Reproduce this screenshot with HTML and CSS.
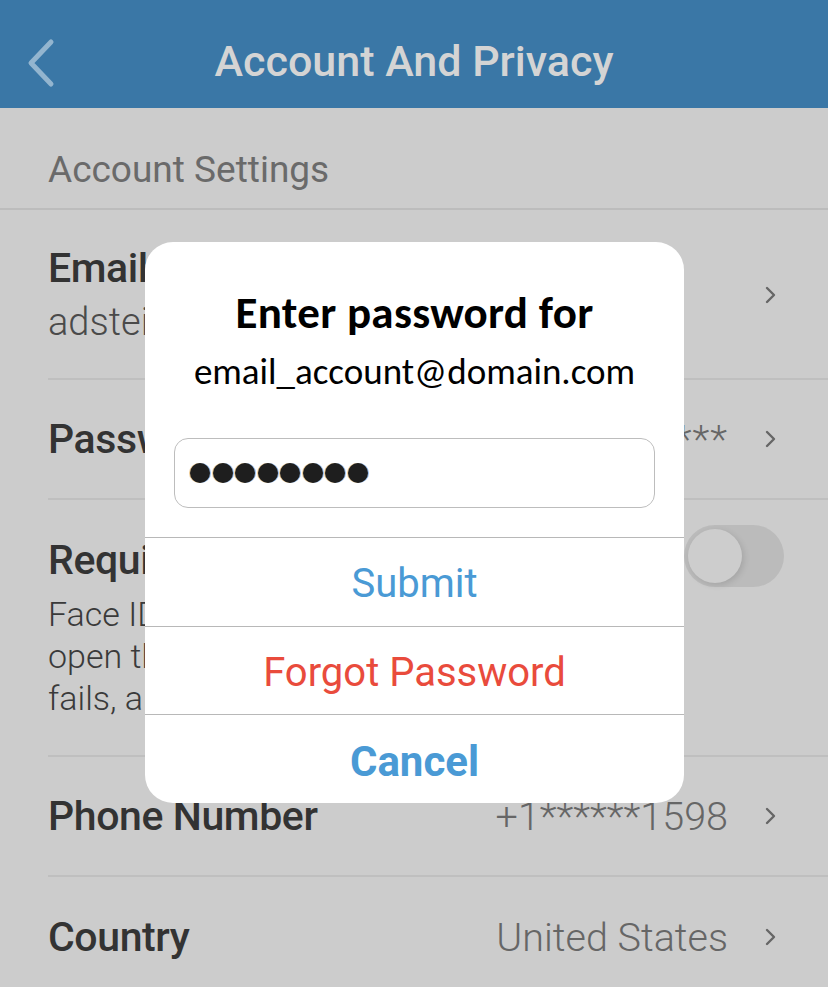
FILE: index.html
```html
<!DOCTYPE html>
<html lang="en">
<head>
<meta charset="utf-8">
<title>Account And Privacy</title>
<link rel="stylesheet" href="styles.css">
</head>
<body>
<div class="screen">
  <header class="navbar">
    <div class="nav-left">
      <svg class="back" width="30" height="50" viewBox="0 0 30 50"><path d="M25 4 L5 25 L25 46" fill="none" stroke="#93b5cf" stroke-width="5" stroke-linecap="round" stroke-linejoin="round"/></svg>
    </div>
    <h1 class="nav-title">Account And Privacy</h1>
    <div class="nav-right"></div>
  </header>

  <div class="section-title">Account Settings</div>

  <div class="list">
    <div class="row row-email">
      <div class="row-text">
        <div class="row-label">Email</div>
        <div class="row-sub">adstein1</div>
      </div>
      <svg class="chev" width="12" height="18" viewBox="0 0 12 18"><path d="M2 2 L9 9 L2 16" fill="none" stroke="#666" stroke-width="2.4" stroke-linecap="round" stroke-linejoin="round"/></svg>
    </div>
    <div class="row row-simple">
      <div class="row-label">Password</div>
      <div class="row-value stars">********</div>
      <svg class="chev" width="12" height="18" viewBox="0 0 12 18"><path d="M2 2 L9 9 L2 16" fill="none" stroke="#666" stroke-width="2.4" stroke-linecap="round" stroke-linejoin="round"/></svg>
    </div>
    <div class="row row-faceid">
      <div class="row-text">
        <div class="row-label">Require ID</div>
        <div class="row-desc">
          <span class="line">Face ID is</span>
          <span class="line">open the app</span>
          <span class="line">fails, a PIN</span>
        </div>
      </div>
      <div class="toggle"><div class="knob"></div></div>
    </div>
    <div class="row row-simple">
      <div class="row-label">Phone Number</div>
      <div class="row-value">+1******1598</div>
      <svg class="chev" width="12" height="18" viewBox="0 0 12 18"><path d="M2 2 L9 9 L2 16" fill="none" stroke="#666" stroke-width="2.4" stroke-linecap="round" stroke-linejoin="round"/></svg>
    </div>
    <div class="row row-simple last">
      <div class="row-label">Country</div>
      <div class="row-value">United States</div>
      <svg class="chev" width="12" height="18" viewBox="0 0 12 18"><path d="M2 2 L9 9 L2 16" fill="none" stroke="#666" stroke-width="2.4" stroke-linecap="round" stroke-linejoin="round"/></svg>
    </div>
  </div>

  <div class="dialog">
    <div class="dialog-body">
      <div class="dialog-title">Enter password for</div>
      <div class="dialog-email">email_account@domain.com</div>
      <div class="pw-field">
        <span class="dot"></span><span class="dot"></span><span class="dot"></span><span class="dot"></span><span class="dot"></span><span class="dot"></span><span class="dot"></span><span class="dot"></span>
      </div>
    </div>
    <div class="dialog-btn submit">Submit</div>
    <div class="dialog-btn forgot">Forgot Password</div>
    <div class="dialog-btn cancel">Cancel</div>
  </div>
</div>
</body>
</html>
```

FILE: styles.css
```css
* { box-sizing: border-box; }
html, body { margin: 0; padding: 0; }
body {
  background: #cccccc;
  font-family: Roboto, "Liberation Sans", sans-serif;
  width: 828px;
  height: 987px;
  overflow: hidden;
}
.screen {
  position: relative;
  width: 828px;
  height: 987px;
  overflow: hidden;
  background: #cccccc;
}
.navbar {
  height: 108px;
  padding-top: 14px;
  background: #3a77a6;
  display: grid;
  grid-template-columns: 1fr auto 1fr;
  align-items: center;
}
.nav-left { padding-left: 26px; display: flex; align-items: center; padding-top: 4px; }
.nav-title {
  margin: 0;
  font-weight: 500;
  font-size: 43px;
  color: #d4d4d4;
  letter-spacing: 0px;
}
.section-title {
  height: 102px;
  padding: 40px 0 0 48px;
  font-size: 37px;
  line-height: 44px;
  color: #6a6a6a;
  border-bottom: 2px solid #bcbcbc;
}
.list { padding-left: 48px; }
.row {
  display: flex;
  align-items: center;
  border-bottom: 2px solid #bfbfbf;
  padding-right: 51px;
}
.row.last { border-bottom: none; }
.row-text { flex: 1; }
.row-label {
  font-size: 41px;
  font-weight: 500;
  color: #333333;
  line-height: 48px;
  letter-spacing: -0.4px;
}
.row-sub {
  font-size: 38px;
  color: #4a4a4a;
  line-height: 48px;
  margin-top: 6px;
  font-weight: 300;
}
.row-email { height: 170px; padding-top: 2px; }
.row-simple { height: 120px; }
.row-simple .row-label { flex: 1; }
.row-value {
  font-size: 39.5px;
  font-weight: 300;
  color: #666666;
  margin-right: 37px;
}
.stars { letter-spacing: 1px; }
.chev { flex: none; }
.row-faceid {
  height: 257px;
  align-items: flex-start;
  padding-top: 36px;
  padding-right: 44px;
}
.row-desc {
  margin-top: 9px;
  font-size: 34px;
  line-height: 42px;
  color: #3a3a3a;
  font-weight: 300;
}
.row-desc .line { display: block; }
.toggle {
  flex: none;
  width: 100px;
  height: 62px;
  border-radius: 31px;
  background: #bbbbbb;
  margin-top: -11px;
  padding: 4px;
}
.knob {
  width: 54px;
  height: 54px;
  border-radius: 50%;
  background: #cdcdcd;
  box-shadow: 2px 2px 6px rgba(0,0,0,0.12);
}

.dialog {
  position: absolute;
  left: 145px;
  top: 242px;
  width: 539px;
  height: 561px;
  background: #ffffff;
  border-radius: 28px;
  overflow: hidden;
  display: flex;
  flex-direction: column;
}
.dialog-body {
  padding: 45px 29px 29px;
  display: flex;
  flex-direction: column;
  align-items: center;
}
.dialog-title {
  font-family: Carlito, Lato, "Open Sans", sans-serif;
  font-weight: 700;
  font-size: 45px;
  letter-spacing: 0.3px;
  line-height: 52px;
  color: #000;
}
.dialog-email {
  font-family: Carlito, Lato, "Open Sans", sans-serif;
  font-size: 37px;
  line-height: 44px;
  margin-top: 11px;
  color: #000;
}
.pw-field {
  margin-top: 44px;
  width: 481px;
  height: 70px;
  border: 1px solid #bdbdbd;
  border-radius: 14px;
  display: flex;
  align-items: center;
  gap: 2.5px;
  padding-left: 15px;
}
.dot {
  width: 20px;
  height: 20px;
  border-radius: 50%;
  background: #1e1e1e;
  box-shadow: -1px 0 0 rgba(220,150,40,0.5), 1px 0 0 rgba(40,120,220,0.5);
}
.dialog-btn {
  height: 89px;
  border-top: 1.5px solid #b8b8b8;
  display: flex;
  align-items: center;
  justify-content: center;
  font-size: 40px;
  padding-top: 4px;
}
.submit { color: #4a9ad5; }
.forgot { color: #e94b3c; }
.cancel { color: #4a9ad5; font-weight: 700; font-size: 42px; }
```
